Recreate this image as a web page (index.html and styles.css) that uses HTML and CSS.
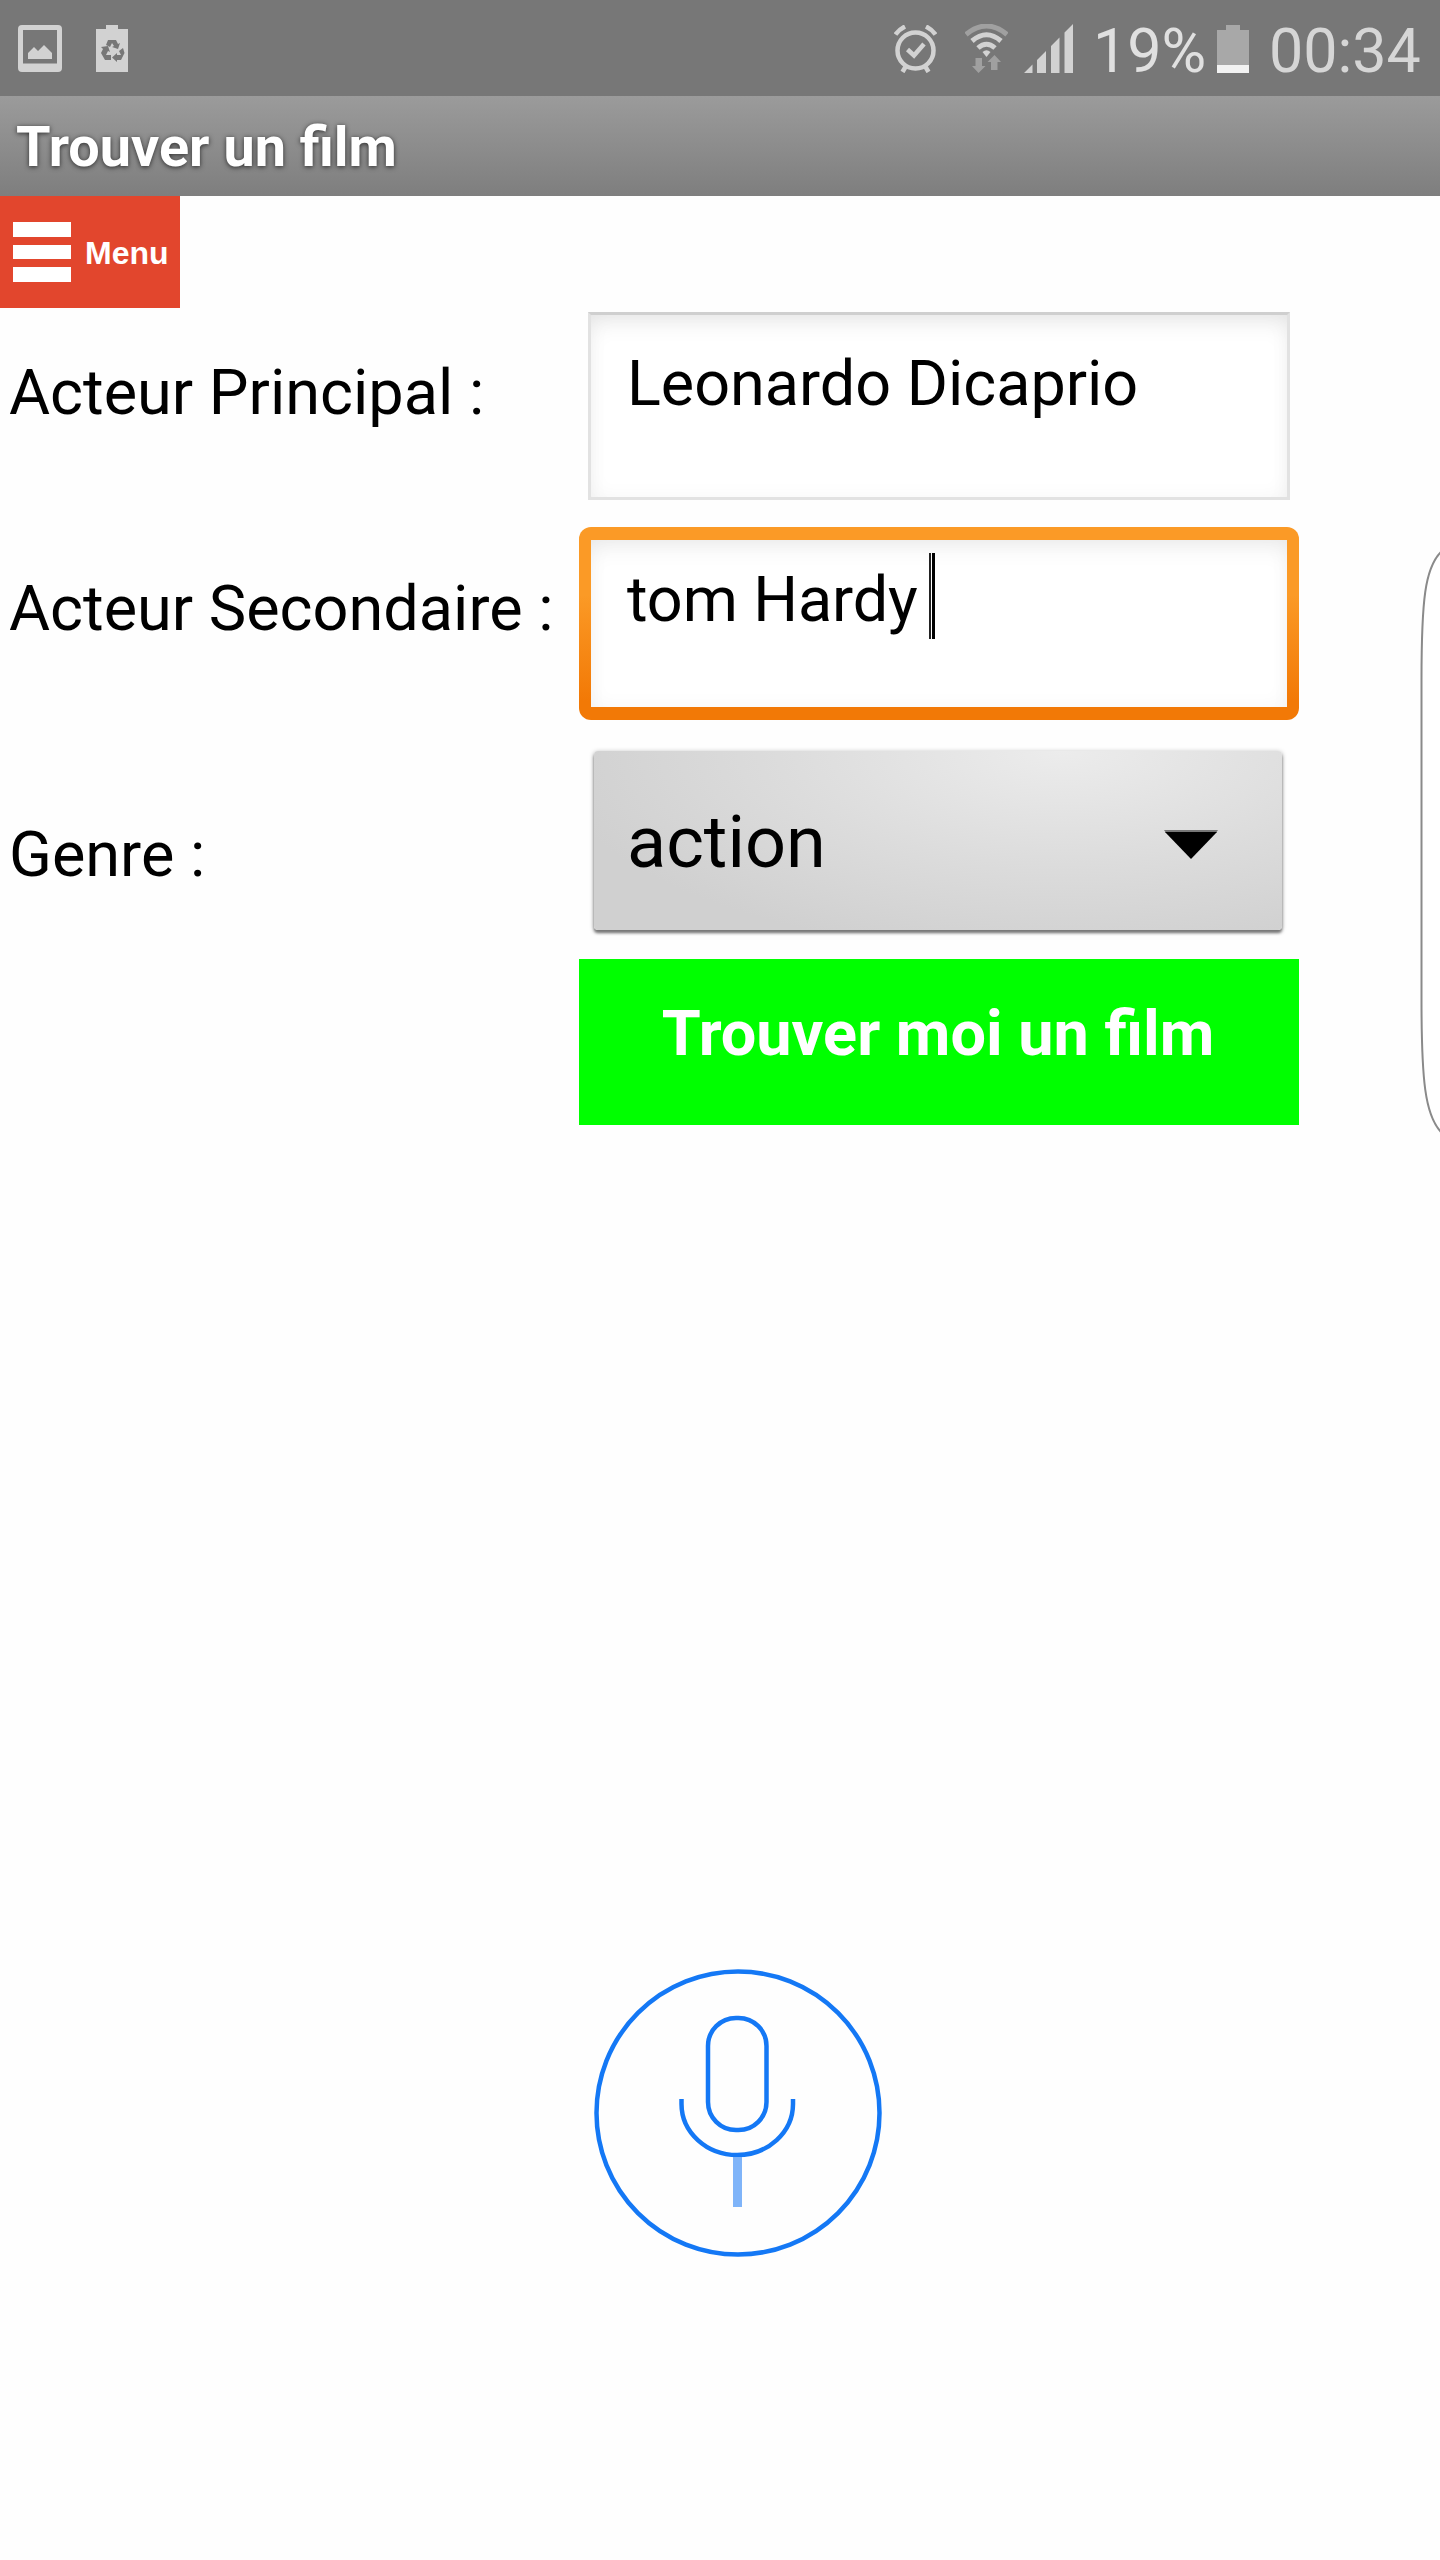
FILE: index.html
```
<!DOCTYPE html>
<html lang="fr">
<head>
    <meta charset="UTF-8">
    <meta name="viewport" content="width=device-width, initial-scale=1.0">
    <title>Trouver un film</title>
    <link rel="stylesheet" href="styles.css">
</head>
<body>
    <header class="status-bar">
        <div class="status-left">
            <svg class="icon-image" width="44" height="47" viewBox="0 0 44 47">
                <path fill-rule="evenodd" d="M4 0H40Q44 0 44 4V43Q44 47 40 47H4Q0 47 0 43V4Q0 0 4 0ZM5 5V38.500H39V5Z"/>
                <path d="M10 34V28L16 22L20 26L26 20L34 28V34Z"/>
            </svg>
            <svg class="icon-recycle" width="32" height="47" viewBox="0 0 32 47">
                <path d="M10 0H22V4H32V47H0V4H10Z"/>
                <g class="cutout">
                    <path d="M12 15H20L22 19L24 18L22 24L16 22L18 21L16 18L14 22L10 20Z"/>
                    <path d="M5 22L12 21L14 27L12 26L10 30H15V35H9L5 28L7 24Z"/>
                    <path d="M23 26L27 23L28.500 28L25 35H21V37L16 32.500L21 28V30H25Z"/>
                </g>
            </svg>
        </div>
        <div class="status-right">
            <svg class="icon-alarm" width="43" height="48" viewBox="0 0 43 48">
                <circle cx="21.500" cy="25.500" r="18"/>
                <path d="M13.500 24.500L20 30.500L30 19"/>
                <path d="M1.500 9.500Q5 4.500 11 1.500M41.500 9.500Q38 4.500 32 1.500M12 41L8.500 47M31 41L34.500 47"/>
            </svg>
            <svg class="icon-wifi" width="43" height="49" viewBox="0 0 43 49">
                <path class="arc dim" d="M1 10.500Q21.500 -6.500 42 10.500"/>
                <path class="arc" d="M7 17Q21.500 4.500 36 17M13 24Q21.500 16.500 30 24"/>
                <path class="fill" d="M17.500 28Q21.500 24.500 25.500 28L21.500 33Z"/>
                <path class="fill dim" d="M10.500 34H17V42H20.500L13.500 49L7 42H10.500ZM26 46V38H22.500L29.500 31L36 38H32.500V46Z"/>
            </svg>
            <svg class="icon-signal" width="49" height="49" viewBox="0 0 49 49">
                <path d="M0 49L8.500 40.500V49ZM13 49V36L22 27V49ZM27 49V22L35.500 13.500V49ZM40.500 49V8.500L49 0V49Z"/>
            </svg>
            <span class="battery-level">19%</span>
            <svg class="icon-battery" width="32" height="48" viewBox="0 0 32 48">
                <path class="shell" d="M9 0H23V5H32V48H0V5H9Z"/>
                <path class="charge" d="M0 40H32V48H0Z"/>
            </svg>
            <span class="clock">00:34</span>
        </div>
    </header>

    <div class="title-bar">
        <h1>Trouver un film</h1>
    </div>

    <button class="menu-button" type="button">
        <span class="menu-bars">
            <i></i>
            <i></i>
            <i></i>
        </span>
        <span class="menu-label">Menu</span>
    </button>

    <form class="search-form">
        <div class="form-row">
            <label class="form-label">Acteur Principal :</label>
            <div class="form-input">Leonardo Dicaprio</div>
        </div>

        <div class="form-row row-focus">
            <label class="form-label">Acteur Secondaire :</label>
            <div class="form-input focused">
                <div class="field"><span class="value">tom Hardy </span><span class="caret"></span></div>
            </div>
        </div>

        <div class="form-row row-genre">
            <label class="form-label">Genre :</label>
            <div class="spinner">
                <span>action</span>
                <svg width="56" height="30" viewBox="0 0 56 30">
                    <path class="arrow-edge" d="M1 0H55L53 3H3Z"/>
                    <path d="M2 2H54L28 29Z"/>
                </svg>
            </div>
        </div>

        <button class="submit-button" type="button">Trouver moi un film</button>
    </form>

    <div class="voice">
        <svg width="288" height="288" viewBox="0 0 288 288">
            <circle cx="144" cy="144" r="141.500"/>
            <rect x="114" y="49" width="58.500" height="112" rx="28"/>
            <path d="M87.500 130V135A55.750 51 0 0 0 199 135V130"/>
            <path class="stem" d="M143.500 188V238"/>
        </svg>
    </div>

    <!-- edge panel handle, floats over the page -->
    <svg class="edge-handle" width="20" height="584" viewBox="0 0 20 584">
        <path d="M21 2C5 18 1.500 50 1.500 130V450C1.500 530 5 565 21 582"/>
    </svg>
</body>
</html>
```

FILE: styles.css
```
:root {
    --status: #777777;
    --icon: #d2d2d2;
    --icon-dim: #a0a0a0;
    --red: #e2462d;
    --green: #00ff00;
    --blue: #1478f5;
}

* {
    box-sizing: border-box;
    margin: 0;
    padding: 0;
}

body {
    font-family: Roboto, "Liberation Sans", sans-serif;
    background-color: #fefefe;
    color: #000;
    width: 1440px;
    height: 2560px;
    position: relative;
    overflow: hidden;
}

svg {
    display: block;
    flex: none;
}

/* Status bar */
.status-bar {
    height: 96px;
    padding: 0 20px 0 18px;
    background-color: var(--status);
    display: flex;
    justify-content: space-between;
}

.status-left,
.status-right {
    display: flex;
    align-items: flex-start;
    padding-top: 25px;
    fill: var(--icon);
}

.icon-recycle {
    margin-left: 34px;
}

.cutout {
    fill: var(--status);
}

.icon-alarm {
    fill: none;
    stroke: var(--icon);
    stroke-width: 4.5;
}

.icon-wifi {
    margin: -1px 0 0 28px;
}

.arc {
    fill: none;
    stroke: var(--icon);
    stroke-width: 5;
}

.arc.dim {
    stroke: var(--icon-dim);
}

.fill.dim {
    fill: var(--icon-dim);
}

.icon-signal {
    margin: -1px 0 0 16px;
}

.battery-level,
.clock {
    font-size: 61px;
    line-height: 70px;
    margin-top: -9px;
    white-space: nowrap;
}

.battery-level {
    width: 124px;
    margin-left: 20px;
    color: #e0e0e0;
}

.shell {
    fill: #a8a8a8;
}

.charge {
    fill: #f2f2f2;
}

.clock {
    width: 151px;
    margin-left: 20px;
    color: #d6d6d6;
}

/* Title */
.title-bar {
    height: 100px;
    padding: 2px 0 0 16px;
    background: linear-gradient(#9b9b9b, #7e7e7e);
    display: flex;
    align-items: center;
}

.title-bar h1 {
    font-size: 55.8px;
    line-height: 66px;
    font-weight: 700;
    color: #fff;
    text-shadow: 0 1px 5px rgba(0, 0, 0, 0.7);
}

.menu-button {
    width: 180px;
    height: 112px;
    padding-left: 13px;
    border: none;
    background-color: var(--red);
    color: #fff;
    display: flex;
    align-items: center;
}

.menu-bars {
    display: flex;
    flex-direction: column;
    gap: 8px;
    width: 58px;
}

.menu-bars i {
    height: 14.5px;
    background-color: #fff;
}

.menu-label {
    margin: 2px 0 0 14px;
    font: bold 32px/36px "Liberation Sans", Arial, sans-serif;
}

/* Form */
.search-form {
    padding-top: 4px;
}

.form-row {
    display: grid;
    grid-template-columns: 570px 702px;
    column-gap: 9px;
    padding-left: 9px;
    align-items: start;
    height: 215px;
}

.form-label {
    font-size: 63px;
    line-height: 74px;
    padding-top: 44px;
    white-space: nowrap;
}

.form-input {
    height: 188px;
    padding: 32px 0 0 36px;
    border: 3px solid #e2e2e2;
    border-top-color: #cfcfcf;
    background-color: #fff;
    box-shadow: inset 0 14px 24px -8px rgba(0, 0, 0, 0.09), inset 0 0 20px rgba(0, 0, 0, 0.04);
    font-size: 62.9px;
    line-height: 74px;
    white-space: nowrap;
}

.row-focus,
.row-genre {
    grid-template-columns: 570px 720px;
    column-gap: 0;
}

.form-input.focused {
    height: 193px;
    padding: 13px 12px;
    border: none;
    border-radius: 12px;
    background: linear-gradient(#fb9a26 35%, #f27906 90%);
    box-shadow: none;
}

.row-focus .form-label {
    padding-top: 45px;
}

.field {
    height: 167px;
    padding: 13px 0 0 36px;
    background-color: #fff;
    box-shadow: inset 0 14px 24px -8px rgba(0, 0, 0, 0.07), inset 0 0 20px rgba(0, 0, 0, 0.04);
    display: flex;
    white-space: pre;
}

.value {
    padding-top: 10px;
    margin-right: -4px;
    letter-spacing: -0.1px;
}

.caret {
    width: 6px;
    height: 86px;
    border-left: 2px solid #222;
    border-right: 3px solid #000;
}

.row-genre {
    height: 217px;
}

.row-genre .form-label {
    padding-top: 76px;
}

.spinner {
    width: 688px;
    height: 179px;
    margin: 9px 0 0 15px;
    padding: 4px 63px 0 33px;
    border-radius: 4px;
    background: radial-gradient(ellipse 75% 115% at 68% 0, #ececec, #dcdcdc 55%, #d0d0d0);
    box-shadow: 0 3px 3px #777, 0 1px 5px rgba(0, 0, 0, 0.3);
    display: flex;
    align-items: center;
    justify-content: space-between;
    font-size: 72px;
}

.spinner svg {
    margin-top: 5px;
}

.arrow-edge {
    fill: #777;
}

.submit-button {
    display: block;
    width: 720px;
    height: 166px;
    margin-left: 579px;
    padding: 0 2px 16px 0;
    border: none;
    background-color: var(--green);
    color: #fff;
    font: bold 63px/74px Roboto, sans-serif;
}

/* Voice search */
.voice {
    margin: 844px 0 0 594px;
    fill: none;
    stroke: var(--blue);
    stroke-width: 4.5;
}

.stem {
    stroke: #7fb4f9;
    stroke-width: 9;
}

.edge-handle {
    position: absolute;
    top: 550px;
    right: 0;
    fill: #fff;
    stroke: #8a8a8a;
    stroke-width: 2;
}
```
